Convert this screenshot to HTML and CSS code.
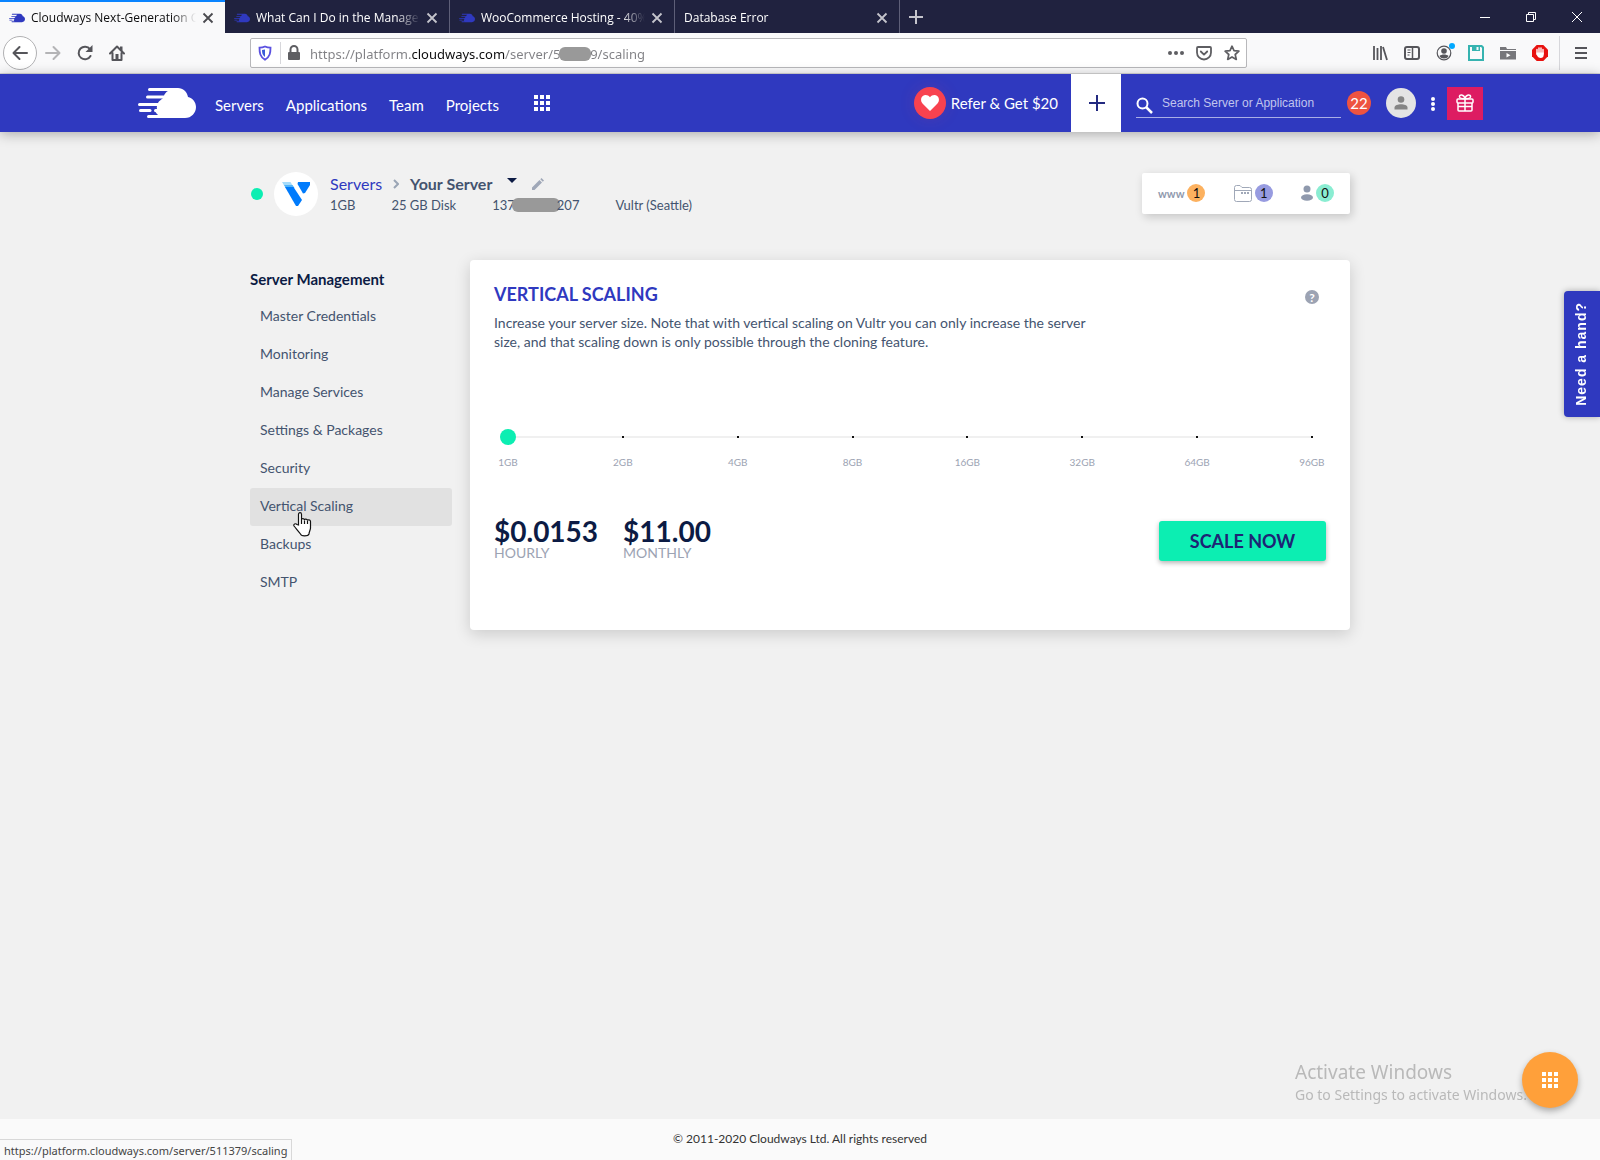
FILE: index.html
```html
<!DOCTYPE html>
<html lang="en">
  <head>
    <meta charset="UTF-8" />
    <title>Cloudways Next-Generation Cloud</title>
    <link rel="stylesheet" href="styles.css">
  </head>
  <body>
    <svg class="defs" aria-hidden="true">
      <symbol id="cloud" viewBox="0 0 58 30">
        <path d="M11.500 0H40c5 0 9 3.500 10 9 4.500 1 8 5 8 10 0 6-4.500 11-11 11H10.500a1.500 1.500 0 0 1 0-3H20c-1-1-2-2-2.500-3a1.500 1.500 0 0 1 0-3h1.500c-.3-1-.3-2 0-3H1.500a1.500 1.500 0 0 1 0-3H20c1-2 3-3.500 5-4.500h-15.500a1.500 1.500 0 0 1 0-3H26c1-2 2-3.500 4-4.500H11.500a1.500 1.500 0 0 1 0-3z"/>
        <path d="M2.500 21H12a1.500 1.500 0 0 1 0 3H2.500a1.500 1.500 0 0 1 0-3z"/>
      </symbol>
      <symbol id="close" viewBox="0 0 12 12">
        <path d="M1.500 1.500l9 9m0-9l-9 9" fill="none" stroke="currentColor" stroke-width="1.800"/>
      </symbol>
      <symbol id="grid" viewBox="0 0 16 16">
        <path d="M0 0h4v4H0zM6 0h4v4H6zM12 0h4v4h-4zM0 6h4v4H0zM6 6h4v4H6zM12 6h4v4h-4zM0 12h4v4H0zM6 12h4v4H6zM12 12h4v4h-4z"/>
      </symbol>
    </svg>

    <!-- Browser tabs -->
    <div class="tab-bar">
      <div class="tab active">
        <svg class="favicon"><use href="#cloud"/></svg>
        <span class="tab-title">Cloudways Next-Generation Cl</span>
        <button class="tab-close" aria-label="Close tab"><svg><use href="#close"/></svg></button>
      </div>
      <div class="tab">
        <svg class="favicon"><use href="#cloud"/></svg>
        <span class="tab-title">What Can I Do in the Manage S</span>
        <button class="tab-close" aria-label="Close tab"><svg><use href="#close"/></svg></button>
      </div>
      <div class="tab">
        <svg class="favicon"><use href="#cloud"/></svg>
        <span class="tab-title">WooCommerce Hosting - 40%</span>
        <button class="tab-close" aria-label="Close tab"><svg><use href="#close"/></svg></button>
      </div>
      <div class="tab">
        <span class="tab-title">Database Error</span>
        <button class="tab-close" aria-label="Close tab"><svg><use href="#close"/></svg></button>
      </div>
      <button class="new-tab" aria-label="New tab"><svg width="14" height="14"><path d="M7 0v14M0 7h14" stroke="currentColor" stroke-width="2"/></svg></button>
      <div class="window-btns">
        <button aria-label="Minimize"><svg width="10" height="10"><path d="M0 5.500h10" stroke="#fff"/></svg></button>
        <button aria-label="Restore"><svg width="10" height="10" fill="none" stroke="#fff"><path d="M.5 2.500h7v7h-7zM2.500 2.500v-2h7v7h-2"/></svg></button>
        <button aria-label="Close"><svg width="10" height="10"><path d="M0 0l10 10M10 0L0 10" stroke="#fff"/></svg></button>
      </div>
    </div>

    <!-- Browser toolbar -->
    <div class="toolbar">
      <div class="tool-nav">
        <button class="back" aria-label="Back"><svg viewBox="0 0 16 16"><path d="M15 8H2M7.500 2L1.500 8l6 6" fill="none" stroke="currentColor" stroke-width="2" stroke-linecap="round" stroke-linejoin="round"/></svg></button>
        <button class="forward" aria-label="Forward"><svg viewBox="0 0 16 16"><path d="M1 8h13M8.500 2l6 6-6 6" fill="none" stroke="currentColor" stroke-width="2" stroke-linecap="round" stroke-linejoin="round"/></svg></button>
        <button aria-label="Reload"><svg viewBox="0 0 16 16"><path d="M13.500 11A6.300 6.300 0 1 1 13 4.200" fill="none" stroke="currentColor" stroke-width="2" stroke-linecap="round"/><path d="M15.500 0v7h-7z"/></svg></button>
        <button aria-label="Home"><svg viewBox="0 0 16 16"><path d="M1 8.500L8 1.500l7 7M3.500 8v7h9V8" fill="none" stroke="currentColor" stroke-width="2" stroke-linejoin="round" stroke-linecap="round"/><path d="M6.500 9h3v6h-3zM11 1.500h2.500V6L11 4z"/></svg></button>
      </div>
      <div class="url-bar">
        <svg class="shield" viewBox="0 0 16 16"><path d="M8 1.500c2 1 4 1.200 5.500 1.200 0 5-.5 9-5.500 12-5-3-5.500-7-5.500-12C4 2.700 6 2.500 8 1.500z" fill="none" stroke="#5a50e0" stroke-width="1.800"/><path d="M8 4.500V12c-2.500-2-3-4-3-7z" fill="#3a5bd8"/></svg>
        <span class="url-sep"></span>
        <svg class="lock" viewBox="0 0 14 16"><path d="M3.500 8V4.500a3.500 3.500 0 0 1 7 0V8" fill="none" stroke="currentColor" stroke-width="2"/><rect x="1" y="7" width="12" height="8" rx="1"/></svg>
        <div class="url-field">
          <input class="url" type="text" aria-label="Address" value="https://platform.cloudways.com/server/511379/scaling" />
          <span class="url-mask"></span>
        </div>
        <button aria-label="Page actions"><svg viewBox="0 0 16 16"><circle cx="2" cy="8" r="2"/><circle cx="8" cy="8" r="2"/><circle cx="14" cy="8" r="2"/></svg></button>
        <button aria-label="Save to Pocket"><svg viewBox="0 0 16 16" fill="none" stroke="currentColor" stroke-width="1.800" stroke-linecap="round" stroke-linejoin="round"><path d="M2 2h12a1 1 0 0 1 1 1v4.500a7 7 0 0 1-14 0V3a1 1 0 0 1 1-1z"/><path d="M4.800 6.500L8 9.600l3.200-3.100"/></svg></button>
        <button aria-label="Bookmark"><svg viewBox="0 0 16 16"><path d="M8 1.200l2 4.500 4.900.5-3.700 3.300 1.100 4.900L8 11.900l-4.300 2.500 1.100-4.900L1.100 6.200 6 5.700z" fill="none" stroke="currentColor" stroke-width="1.700" stroke-linejoin="round"/></svg></button>
      </div>
      <div class="tool-ext">
        <button aria-label="Library"><svg viewBox="0 0 16 16"><path d="M2 1v14M5.500 3v12M9 1v14M11 2l4 13" fill="none" stroke="currentColor" stroke-width="1.800"/></svg></button>
        <button aria-label="Sidebars"><svg viewBox="0 0 16 16" fill="none" stroke="currentColor"><rect x="1" y="2" width="14" height="12" rx="2" stroke-width="2"/><path d="M8.500 2v12" stroke-width="1.500"/><path d="M3.500 5h3M3.500 7.500h3M3.500 10h2"/></svg></button>
        <button class="account" aria-label="Account"><svg viewBox="0 0 16 16"><circle cx="8" cy="8" r="6.800" fill="none" stroke="currentColor" stroke-width="1.200"/><circle cx="8" cy="6" r="2.800"/><path d="M3.500 11c2-2 7-2 9 0-1 1.800-2.500 2.500-4.500 2.500S4.500 12.800 3.500 11z"/></svg></button>
        <button class="save" aria-label="Save page"><svg viewBox="0 0 16 16"><path d="M0 0h14l2 2v14H0zM2 2v12h12V3l-1-1h-1v4H4V2z" fill-rule="evenodd"/><path d="M8.500 2h2v3h-2z" fill="#f9f9fa"/></svg></button>
        <button class="folder" aria-label="Video folder"><svg viewBox="0 0 16 16"><path d="M0 2h6l1 2h9v10.500H0z"/><path d="M0 5.500h16" stroke="#f9f9fa"/><path d="M6.500 8v4.500l4-2.200z" fill="#fff"/></svg></button>
        <button aria-label="AdBlock"><svg viewBox="0 0 16 16"><path d="M4.700 0h6.600L16 4.700v6.600L11.300 16H4.700L0 11.300V4.700z" fill="#e8110f"/><path d="M5 9V4.500M7 8V3M9 8V3M11 9V4.500" stroke="#fff" stroke-width="1.400" stroke-linecap="round"/><path d="M4.500 7.500h7.200V10c0 2-1.200 3-3 3s-3.200-1-4.200-3.500z" fill="#fff"/></svg></button>
        <span class="tool-sep"></span>
        <button aria-label="Menu"><svg viewBox="0 0 16 16"><path d="M2 3h12M2 8h12M2 13h12" stroke="currentColor" stroke-width="2"/></svg></button>
      </div>
    </div>

    <!-- App header -->
    <header class="header">
      <a class="logo" href="#" aria-label="Cloudways"><svg width="58" height="30"><use href="#cloud"/></svg></a>
      <nav class="main-nav">
        <a href="#">Servers</a>
        <a href="#">Applications</a>
        <a href="#">Team</a>
        <a href="#">Projects</a>
      </nav>
      <button class="apps" aria-label="Apps"><svg width="16" height="16"><use href="#grid"/></svg></button>
      <a class="refer" href="#">
        <span class="heart"><svg width="18" height="16" viewBox="0 0 18 16"><path d="M9 16L1.500 8.500C-.5 6.300-.3 3 1.500 1.300 3.600-.6 7-.3 9 2.200c2-2.500 5.400-2.800 7.500-.9 1.800 1.700 2 5 0 7.200z" fill="#fff"/></svg></span>
        Refer &amp; Get $20
      </a>
      <button class="add" aria-label="Add"><svg width="16" height="16"><path d="M8 0v16M0 8h16" stroke="#232a80" stroke-width="2"/></svg></button>
      <div class="search">
        <svg width="17" height="17" fill="none" stroke="#fff" stroke-width="2"><circle cx="6.500" cy="6.500" r="5"/><path d="M10 10l6 6" stroke-width="2.500"/></svg>
        <input type="text" aria-label="Search" placeholder="Search Server or Application" />
      </div>
      <span class="count">22</span>
      <button class="avatar" aria-label="Profile"><svg width="14" height="14"><circle cx="7" cy="3.500" r="3.300"/><path d="M.5 13.500v-2C.5 9 4 8.200 7 8.200s6.500.8 6.500 3.300v2z"/></svg></button>
      <button class="dots" aria-label="More"><svg width="4" height="14"><circle cx="2" cy="2" r="2"/><circle cx="2" cy="7" r="2"/><circle cx="2" cy="12" r="2"/></svg></button>
      <button class="gift" aria-label="Rewards"><svg width="18" height="18" fill="none" stroke="#fff" stroke-width="1.500"><rect x="1" y="5" width="16" height="4" rx="1"/><path d="M2 9v7a1 1 0 0 0 1 1h12a1 1 0 0 0 1-1V9M9 5v12M2 12.500h14M9 4.500C8 0 3 0 3.500 3c.2 1.500 2 1.700 5.500 1.700 3.500 0 5.300-.2 5.500-1.700C15 0 10 0 9 4.500z"/></svg></button>
    </header>

    <main class="page">
      <section class="server">
        <span class="status"></span>
        <span class="provider"><svg width="28" height="24"><path d="M0 0h8.500l3 5H3z" fill="#a6dcfb"/><path d="M2 3h8.500l2 3H4z" fill="#52b4f8"/><path d="M3 5h8.500L20 18l-4 6h-2z" fill="#007bfc"/><path d="M16 0h12v3l-5 8-2 .5L15.500 2z" fill="#007bfc"/></svg></span>
        <div class="server-info">
          <div class="crumbs">
            <a href="#">Servers</a>
            <svg width="6" height="10"><path d="M1 1l4 4-4 4" fill="none" stroke="#9aa5b5" stroke-width="2"/></svg>
            <strong>Your Server</strong>
            <button class="caret" aria-label="Switch server"><svg width="10" height="5"><path d="M0 0h10L5 5z"/></svg></button>
            <button class="edit" aria-label="Rename"><svg width="12" height="12"><path d="M0 12V9.500L7.500 2 10 4.500 2.500 12zM8.300 1.200L9.500 0 12 2.500l-1.200 1.200z"/></svg></button>
          </div>
          <div class="specs">
            <span>1GB</span>
            <span>25 GB Disk</span>
            <span>137<i class="ip-mask"></i>207</span>
            <span>Vultr (Seattle)</span>
          </div>
        </div>
        <div class="stats">
          <a href="#"><b>www</b><span class="pill orange">1</span></a>
          <a href="#"><svg width="18" height="17" fill="none" stroke="#a0a8b8"><path d="M.5 14.500v-12a2 2 0 0 1 2-2H6l2 2h7.500a2 2 0 0 1 2 2v10a2 2 0 0 1-2 2h-13a2 2 0 0 1-2-2zM.5 5.500h17"/><path d="M7 8h9" stroke-width="2" stroke-dasharray="2 1"/></svg><span class="pill purple">1</span></a>
          <a href="#"><svg width="12" height="16"><circle cx="6" cy="4" r="3.500"/><ellipse cx="6" cy="12.500" rx="6" ry="3.300"/></svg><span class="pill green">0</span></a>
        </div>
      </section>

      <div class="columns">
        <aside class="sidebar">
          <h2>Server Management</h2>
          <nav>
            <a href="#">Master Credentials</a>
            <a href="#">Monitoring</a>
            <a href="#">Manage Services</a>
            <a href="#">Settings &amp; Packages</a>
            <a href="#">Security</a>
            <a class="current" href="#">Vertical Scaling
              <svg class="cursor" width="19" height="25" viewBox="0 0 19 25"><path d="M5.500 13V2.500C5.500 0 8.500 0 8.500 2.500V8c0-2 3-1.800 3 .3 0-1.800 3-1.500 3 .5 0-1.500 3-1.200 3 .7V16c0 2-1.500 3.500-1.500 6-1 2.500-8 2.500-8.500 0-1.500-2-4.500-5.500-6.500-8-.8-2 1.500-3 3-1.500z" fill="#fff" stroke="#111" stroke-width="1.200"/><path d="M8.500 8v4M11.500 8.500V12M14.500 9v3" stroke="#111" stroke-width="1.200"/></svg>
            </a>
            <a href="#">Backups</a>
            <a href="#">SMTP</a>
          </nav>
        </aside>

        <section class="card">
          <div class="card-head">
            <h1>VERTICAL SCALING</h1>
            <button class="help" aria-label="Help">?</button>
          </div>
          <p>Increase your server size. Note that with vertical scaling on Vultr you can only increase the server size, and that scaling down is only possible through the cloning feature.</p>

          <div class="slider">
            <div class="ticks"><i></i><i></i><i></i><i></i><i></i><i></i><i></i><i></i></div>
            <input type="range" min="0" max="7" value="0" aria-label="Server size" />
          </div>
          <div class="sizes">
            <span>1GB</span><span>2GB</span><span>4GB</span><span>8GB</span><span>16GB</span><span>32GB</span><span>64GB</span><span>96GB</span>
          </div>

          <div class="pricing">
            <div class="price"><strong>$0.0153</strong><span>HOURLY</span></div>
            <div class="price"><strong>$11.00</strong><span>MONTHLY</span></div>
            <button class="scale-btn">SCALE NOW</button>
          </div>
        </section>
      </div>
    </main>

    <footer class="footer">© 2011-2020 Cloudways Ltd. All rights reserved</footer>

    <button class="need-hand">Need a hand?</button>
    <div class="activate">
      <div class="activate-title">Activate Windows</div>
      <div>Go to Settings to activate Windows.</div>
    </div>
    <button class="fab" aria-label="Quick menu"><svg width="16" height="16"><use href="#grid"/></svg></button>
    <div class="link-status">https://platform.cloudways.com/server/511379/scaling</div>
  </body>
</html>
```
FILE: styles.css
```css
* {
  box-sizing: border-box;
}

body {
  margin: 0;
  min-height: 100vh;
  display: flex;
  flex-direction: column;
  background: #f1f1f1;
  color: #44546f;
  font-family: Lato, "Liberation Sans", sans-serif;
  font-size: 14px;
}

a {
  color: inherit;
  text-decoration: none;
}

button {
  display: flex;
  align-items: center;
  justify-content: center;
  padding: 0;
  border: none;
  background: none;
  color: inherit;
  font-family: inherit;
  cursor: pointer;
}

svg {
  display: block;
  flex: none;
  fill: currentColor;
}

svg[fill="none"] {
  fill: none;
}

.defs {
  position: absolute;
  width: 0;
  height: 0;
}

/* Browser tabs */
.tab-bar {
  display: flex;
  height: 33px;
  background: #20223f;
  color: #fff;
  font-family: "Open Sans", "Noto Sans", sans-serif;
  font-size: 12px;
}

.tab {
  display: flex;
  align-items: center;
  gap: 6px;
  width: 225px;
  padding: 2px 11px 0 9px;
  border-right: 1px solid #5e5f78;
}

.tab.active {
  background: #f9f9fa;
  color: #0c0c0d;
  border-top: 2px solid #0a84ff;
  border-right: none;
  padding-top: 0;
}

.favicon {
  width: 16px;
  height: 10px;
  color: #2f39bf;
}

.tab-title {
  flex: 1;
  overflow: hidden;
  white-space: nowrap;
  mask-image: linear-gradient(to left, transparent, #000 24px);
}

.tab-close {
  color: #c4c4cc;
}

.tab.active .tab-close {
  color: #4a4a4f;
}

.tab-close svg {
  width: 12px;
  height: 12px;
}

.new-tab {
  width: 32px;
  color: #c4c4cc;
}

.window-btns {
  display: flex;
  margin-left: auto;
}

.window-btns button {
  width: 46px;
}

/* Browser toolbar */
.toolbar {
  display: flex;
  align-items: center;
  height: 41px;
  background: #f9f9fa;
  border-bottom: 1px solid #d8d8d8;
  color: #55555a;
}

.toolbar button svg {
  width: 16px;
  height: 16px;
}

.tool-nav {
  display: flex;
  align-items: center;
  width: 250px;
  padding-left: 3px;
}

.tool-nav button {
  width: 32px;
}

.tool-nav .back {
  width: 34px;
  height: 34px;
  border: 1px solid #b1b1b3;
  border-radius: 50%;
  background: #fff;
}

.tool-nav .forward {
  color: #b4b4b6;
}

.url-bar {
  display: flex;
  align-items: center;
  flex: 1;
  height: 30px;
  padding: 0 0 0 6px;
  border: 1px solid #b8b8bb;
  border-radius: 2px;
  background: #fff;
  color: #5e5e62;
}

.url-bar button {
  width: 28px;
}

.shield {
  width: 16px;
  height: 16px;
}

.url-sep {
  height: 22px;
  border-left: 1px solid #d7d7db;
  margin: 0 6px 0 7px;
}

.lock {
  width: 14px;
  height: 16px;
}

.url-field {
  position: relative;
  flex: 1;
  margin-left: 9px;
  padding-top: 2px;
}

/* the domain is dark, the rest of the address is grey */
.url {
  display: block;
  width: 100%;
  padding: 0;
  border: none;
  font-family: "Noto Sans", "Open Sans", sans-serif;
  font-size: 13px;
  background: linear-gradient(90deg, #808084 101px, #0c0c0d 101px, #0c0c0d 195px, #808084 195px);
  background-clip: text;
  -webkit-background-clip: text;
  color: transparent;
}

.url-mask {
  position: absolute;
  left: 249px;
  top: 4px;
  width: 32px;
  height: 14px;
  border-radius: 6px;
  background: #999;
}

.tool-ext {
  display: flex;
  align-items: center;
  width: 353px;
  padding-left: 117px;
}

.tool-ext button {
  position: relative;
  width: 32px;
}

.account::after {
  content: "";
  position: absolute;
  right: 5px;
  top: -2px;
  width: 6px;
  height: 6px;
  border-radius: 50%;
  background: #00a8ff;
}

.save {
  color: #36b3b0;
}

.folder {
  color: #77777b;
}

.tool-sep {
  height: 34px;
  border-left: 1px solid #d7d7db;
  margin: 0 5px 0 3px;
}

/* App header */
.header {
  display: flex;
  align-items: center;
  height: 58px;
  padding: 0 117px 0 138px;
  background: #2f39bf;
  color: #fff;
  box-shadow: 0 2px 12px rgba(0, 0, 0, 0.3);
}

.main-nav {
  display: flex;
  gap: 22px;
  margin: 3px 35px 0 19px;
  font-size: 15px;
}

.refer {
  display: flex;
  align-items: center;
  gap: 5px;
  margin-left: auto;
  margin-right: 13px;
  font-size: 15px;
}

.heart {
  display: flex;
  align-items: center;
  justify-content: center;
  width: 32px;
  height: 32px;
  border-radius: 50%;
  background: #f8424f;
  box-shadow: 0 0 16px rgba(248, 66, 79, 0.15);
}

.add {
  width: 50px;
  height: 58px;
  padding-left: 2px;
  background: #fff;
}

.search {
  display: flex;
  align-items: center;
  gap: 9px;
  width: 205px;
  height: 29px;
  margin: 0 6px 0 15px;
  border-bottom: 1px solid #a9aee6;
}

.search svg {
  margin-top: 5px;
}

.search input {
  flex: 1;
  min-width: 0;
  padding: 0;
  border: none;
  outline: none;
  background: none;
  color: #fff;
  font-family: "Liberation Sans", sans-serif;
  font-size: 12px;
}

.search input::placeholder {
  color: #c1c5ee;
}

.count {
  width: 24px;
  height: 24px;
  border-radius: 50%;
  background: #ee5340;
  font-size: 15px;
  line-height: 24px;
  text-align: center;
}

.avatar {
  width: 30px;
  height: 30px;
  margin-left: 15px;
  border-radius: 50%;
  background: #e4e4e4;
  color: #858585;
}

.dots {
  width: 31px;
  padding: 2px 0 0 2px;
}

.gift {
  width: 36px;
  height: 33px;
  background: #dd1c62;
}

/* Page */
.page {
  flex: 1;
  width: 100%;
  max-width: 1100px;
  margin: 0 auto;
}

.server {
  display: flex;
  align-items: center;
  padding: 40px 0 0 1px;
}

.status {
  width: 12px;
  height: 12px;
  border-radius: 50%;
  background: #0ceeb2;
}

.provider {
  display: flex;
  align-items: center;
  justify-content: center;
  width: 44px;
  height: 44px;
  margin: 0 12px 0 11px;
  border-radius: 50%;
  background: #fff;
}

.server-info {
  padding-bottom: 2px;
}

.crumbs {
  display: flex;
  align-items: center;
  gap: 11px;
  font-size: 16px;
  line-height: 24px;
}

.crumbs a {
  color: #2f39bf;
}

.caret {
  align-self: flex-start;
  margin: 6px 4px;
  color: #0c1b44;
}

.edit {
  color: #a0a8b8;
}

.specs {
  display: flex;
  gap: 36px;
  font-size: 13px;
  line-height: 18px;
}

.ip-mask {
  display: inline-block;
  width: 48px;
  height: 14px;
  margin: 0 -3px;
  border-radius: 6px;
  background: #999;
  vertical-align: -2px;
}

.stats {
  display: flex;
  align-items: center;
  justify-content: space-between;
  width: 208px;
  height: 41px;
  margin: 0 0 2px auto;
  padding: 0 16px;
  border-radius: 2px;
  background: #fff;
  color: #8f99ad;
  box-shadow: 2px 3px 10px rgba(0, 0, 0, 0.18);
}

.stats a {
  display: flex;
  align-items: center;
  gap: 3px;
}

.stats b {
  font-size: 11px;
}

.pill {
  width: 18px;
  height: 18px;
  border-radius: 50%;
  color: #111;
  font-size: 13px;
  line-height: 18px;
  text-align: center;
}

.orange {
  background: #fcb15f;
}

.purple {
  background: #979be0;
}

.green {
  background: #8aedd2;
}

.columns {
  display: flex;
  align-items: flex-start;
  gap: 18px;
  padding-top: 44px;
}

.sidebar {
  width: 202px;
}

.sidebar h2 {
  margin: 10px 0;
  color: #0c1b44;
  font-size: 15px;
  line-height: 18px;
}

.sidebar a {
  position: relative;
  display: block;
  padding: 0 10px 3px;
  border-radius: 3px;
  line-height: 35px;
}

.sidebar .current {
  background: #e1e1e1;
}

.cursor {
  position: absolute;
  left: 43px;
  top: 24px;
}

.card {
  flex: 1;
  padding: 24px 24px 69px;
  border-radius: 4px;
  background: #fff;
  box-shadow: 0 4px 16px rgba(0, 0, 0, 0.16);
}

.card-head {
  display: flex;
  align-items: flex-end;
  justify-content: space-between;
  padding-right: 7px;
}

.card h1 {
  margin: 0;
  color: #2f39bf;
  font-size: 18px;
  line-height: 20px;
}

.help {
  width: 14px;
  height: 14px;
  border-radius: 50%;
  background: #9ca3b3;
  color: #fff;
  font-size: 12px;
  font-weight: bold;
}

.card p {
  max-width: 610px;
  margin: 9px 0 0;
  line-height: 19px;
}

.slider {
  position: relative;
  margin: 78px 6px 0;
}

.slider input {
  position: relative;
  display: block;
  width: 100%;
  height: 16px;
  margin: 0;
  appearance: none;
  background: none;
}

.slider input::-webkit-slider-thumb {
  appearance: none;
  width: 16px;
  height: 16px;
  border-radius: 50%;
  background: #0ceeb2;
}

.ticks {
  position: absolute;
  left: 7px;
  right: 7px;
  top: 7px;
  display: flex;
  justify-content: space-between;
  background: #f0f0f0;
}

.ticks i {
  width: 2px;
  height: 2px;
  background: #111;
}

.sizes {
  display: flex;
  justify-content: space-between;
  margin: 11px -6px 0;
  color: #9ca3b3;
  font-size: 10px;
  line-height: 12px;
}

.sizes span {
  width: 40px;
  text-align: center;
}

.pricing {
  display: flex;
  align-items: flex-end;
  gap: 25px;
  margin-top: 48px;
}

.price {
  padding-bottom: 2px;
}

.price strong {
  display: block;
  color: #0c1b44;
  font-size: 28px;
  line-height: 30px;
}

.price span {
  display: block;
  color: #9ca3b3;
  line-height: 13px;
}

.scale-btn {
  width: 167px;
  height: 40px;
  margin-left: auto;
  border-radius: 3px;
  background: #0ceeb2;
  color: #1d2474;
  font-size: 18px;
  font-weight: bold;
  box-shadow: 0 2px 5px rgba(0, 0, 0, 0.3);
}

.footer {
  height: 41px;
  background: #fafafa;
  color: #333;
  font-size: 12px;
  line-height: 39px;
  text-align: center;
}

/* Floating parts */
.need-hand {
  position: fixed;
  right: 0;
  top: 291px;
  width: 36px;
  height: 126px;
  padding-right: 2px;
  border-radius: 4px 0 0 4px;
  background: #2f39bf;
  color: #fff;
  font-family: "Liberation Sans", sans-serif;
  font-size: 14px;
  font-weight: bold;
  letter-spacing: 1px;
  writing-mode: sideways-lr;
  box-shadow: 0 0 6px rgba(0, 0, 0, 0.3);
}

.activate {
  position: fixed;
  left: calc(100% - 305px);
  bottom: 55px;
  color: #b9b9b9;
  font-family: "Noto Sans", "Open Sans", sans-serif;
  font-size: 14px;
  line-height: 20px;
  white-space: nowrap;
}

.activate-title {
  font-size: 19px;
  line-height: 25px;
}

.fab {
  position: fixed;
  right: 22px;
  bottom: 52px;
  width: 56px;
  height: 56px;
  border-radius: 50%;
  background: #ffa03a;
  color: #fff;
  box-shadow: 0 3px 6px rgba(0, 0, 0, 0.3);
}

.link-status {
  position: fixed;
  left: 0;
  bottom: 0;
  height: 21px;
  padding: 0 4px;
  border: 1px solid #d8d8d8;
  border-width: 1px 1px 0 0;
  background: #f9f9fa;
  color: #444;
  font-family: "Noto Sans", "Open Sans", sans-serif;
  font-size: 11px;
  line-height: 22px;
}
```
